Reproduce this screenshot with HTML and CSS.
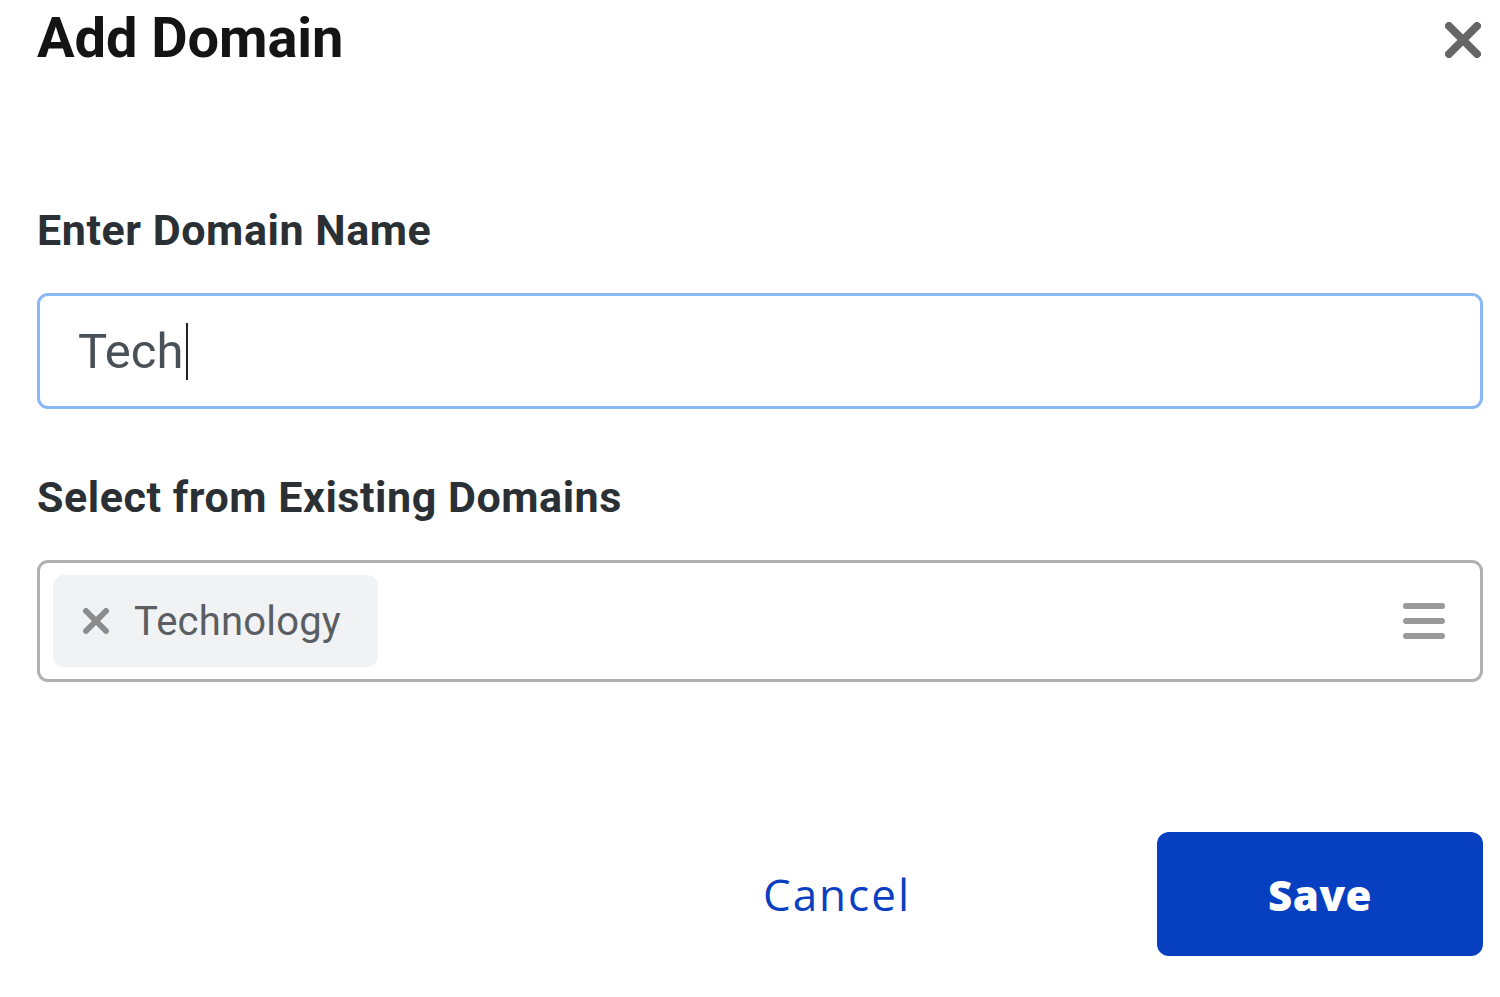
FILE: index.html
```html
<!DOCTYPE html>
<html lang="en">
<head>
<meta charset="utf-8">
<title>Add Domain</title>
<link rel="stylesheet" href="styles.css">
</head>
<body>
<div class="modal">
  <div class="modal-header">
    <h1 class="title">Add Domain</h1>
    <button class="close" aria-label="Close">
      <svg width="36" height="36" viewBox="0 0 36 36"><path d="M4 4 L32 32 M32 4 L4 32" stroke="#666" stroke-width="8" stroke-linecap="round"/></svg>
    </button>
  </div>

  <label class="label label-first">Enter Domain Name</label>
  <div class="input"><span class="input-text">Tech</span><span class="caret"></span></div>

  <label class="label label-second">Select from Existing Domains</label>
  <div class="select">
    <div class="chip">
      <svg class="chip-x" width="28" height="28" viewBox="0 0 28 28"><path d="M4 4 L24 24 M24 4 L4 24" stroke="#8c8c8c" stroke-width="6" stroke-linecap="round"/></svg>
      <span class="chip-text">Technology</span>
    </div>
    <svg class="menu" width="42" height="38" viewBox="0 0 42 38"><path d="M3 4 H39 M3 19 H39 M3 34 H39" stroke="#9a9a9a" stroke-width="6" stroke-linecap="round"/></svg>
  </div>

  <div class="actions">
    <button class="cancel">Cancel</button>
    <button class="save">Save</button>
  </div>
</div>
</body>
</html>
```

FILE: styles.css
```css
html, body {
  margin: 0;
  padding: 0;
  background: #ffffff;
}

.modal {
  width: 1446px;
  padding: 6px 17px 0 37px;
  font-family: Roboto, "Liberation Sans", sans-serif;
}

.modal-header {
  display: flex;
  justify-content: space-between;
  align-items: flex-start;
}

.title {
  margin: 0;
  font-size: 56px;
  line-height: 64px;
  font-weight: 700;
  color: #141414;
  letter-spacing: -0.1px;
}

.close {
  border: 0;
  background: none;
  padding: 0;
  margin-top: 16px;
  margin-right: 2px;
  width: 36px;
  height: 36px;
}

.label {
  display: block;
  font-size: 43px;
  line-height: 50px;
  font-weight: 700;
  color: #2b3035;
  letter-spacing: 0.55px;
}

.label-first { margin-top: 135px; }
.label-second { margin-top: 63px; }

.input {
  margin-top: 38px;
  box-sizing: border-box;
  height: 116px;
  border: 3px solid #8ab8f5;
  border-radius: 11px;
  display: flex;
  align-items: center;
  padding-left: 38px;
}

.input-text {
  font-size: 49px;
  color: #495057;
}

.caret {
  width: 2px;
  height: 57px;
  background: #222;
  margin-left: 2px;
}

.select {
  margin-top: 38px;
  box-sizing: border-box;
  height: 122px;
  border: 3px solid #b0b0b0;
  border-radius: 11px;
  display: flex;
  align-items: center;
  justify-content: space-between;
  padding: 0 35px 0 13px;
}

.chip {
  box-sizing: border-box;
  width: 325px;
  height: 92px;
  background: #f1f2f4;
  border-radius: 11px;
  display: flex;
  align-items: center;
  padding-left: 29px;
  gap: 24px;
}

.chip-text {
  font-size: 40px;
  color: #5a5e62;
  letter-spacing: 0.2px;
}

.actions {
  margin-top: 150px;
  display: flex;
  justify-content: flex-end;
  align-items: center;
}

.cancel {
  border: 0;
  background: none;
  padding: 0;
  margin-right: 246px;
  font-family: "Open Sans", sans-serif;
  font-size: 44px;
  color: #0b3fc1;
  letter-spacing: 2px;
}

.save {
  box-sizing: border-box;
  width: 326px;
  height: 124px;
  border: 0;
  border-radius: 12px;
  background: #063fbf;
  color: #ffffff;
  font-family: "Open Sans", sans-serif;
  font-weight: 800;
  font-size: 42px;
  letter-spacing: 0.5px;
}
```
